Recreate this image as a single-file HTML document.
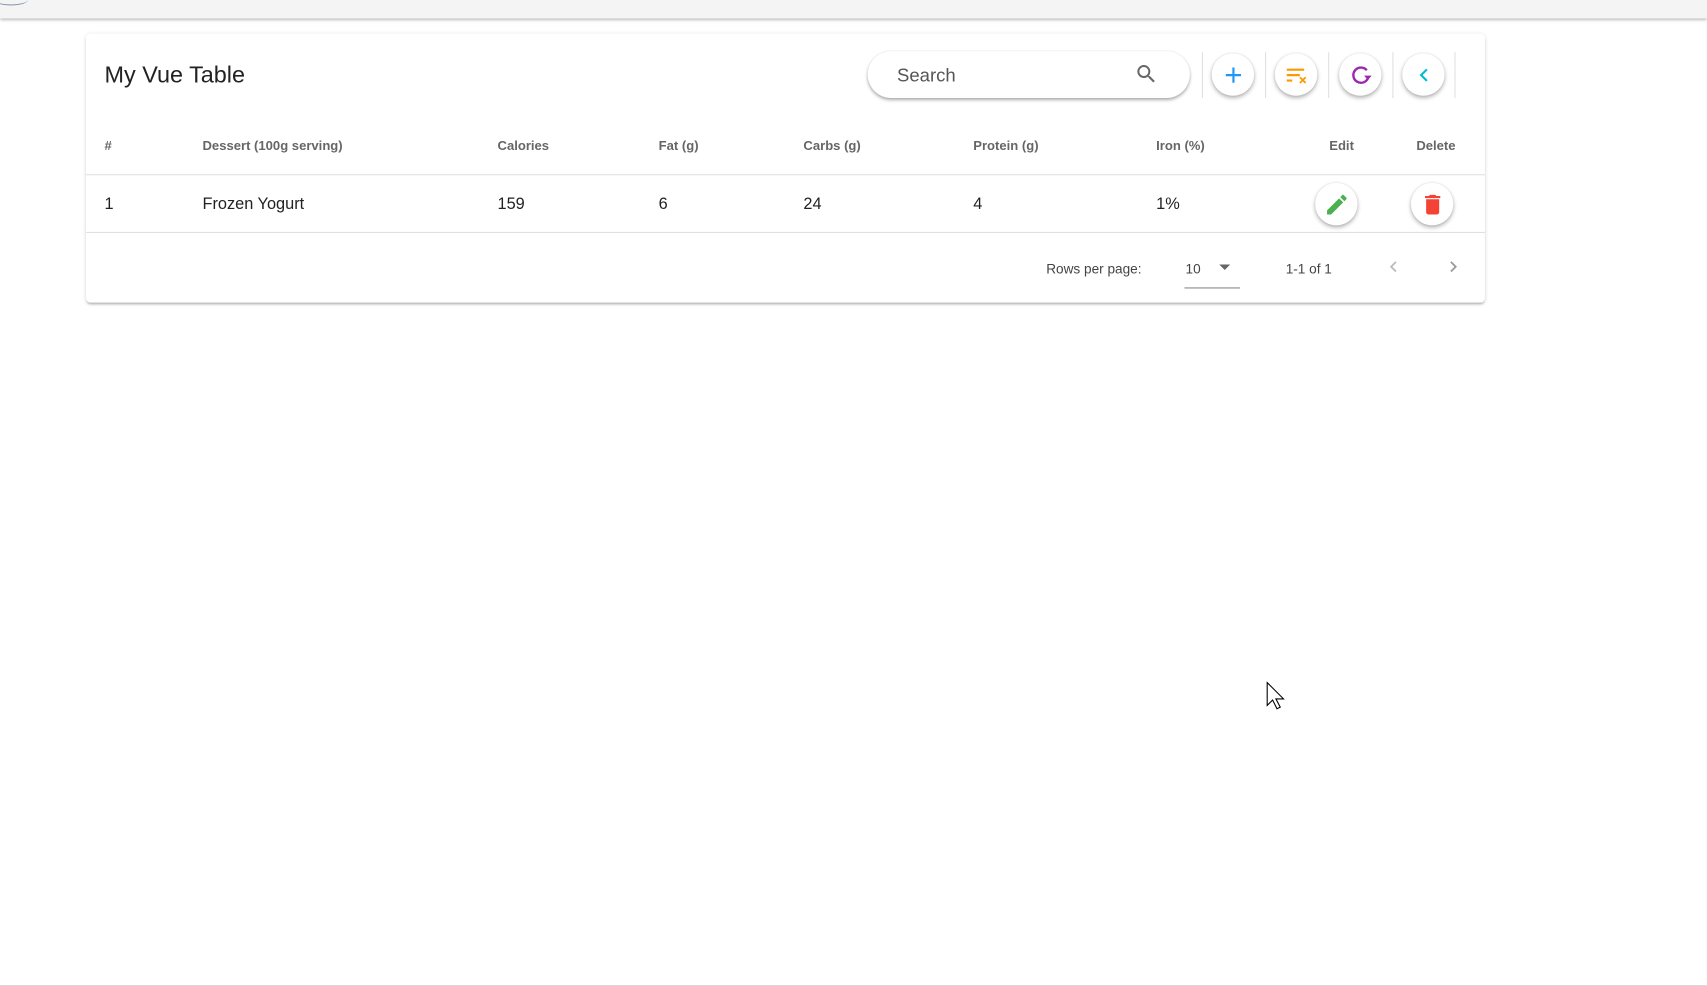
<!DOCTYPE html>
<html><head><meta charset="utf-8"><style>
html,body{margin:0;padding:0;width:1707px;height:986px;overflow:hidden;background:#fff;font-family:"Liberation Sans",sans-serif}
#w{position:absolute;left:0;top:0;width:1568px;height:906px;transform:scale(1.08865);transform-origin:0 0}
.a{position:absolute}
.top{left:0;top:0;width:1568px;height:17px;background:#f4f4f4;box-shadow:0 1px 3px rgba(0,0,0,.35)}
.card{left:79px;top:31px;width:1285px;height:247px;background:#fff;border-radius:4px;box-shadow:0 2px 2px -1px rgba(0,0,0,.25),0 1px 4px rgba(0,0,0,.14)}
.title{left:96px;top:57px;font-size:21.5px;color:#222}
.search{left:797px;top:47px;width:296px;height:43px;border-radius:22px;background:#fff;box-shadow:0 2px 3px rgba(0,0,0,.3),0 0 2px rgba(0,0,0,.1)}
.search span{position:absolute;left:27px;top:13px;font-size:17px;color:#555}
.div{top:48px;width:1px;height:42px;background:#e0e0e0}
.btn{width:39px;height:39px;border-radius:50%;background:#fff;box-shadow:0 2px 4px rgba(0,0,0,.3),0 0 2px rgba(0,0,0,.1)}
.btn svg{position:absolute;left:7.5px;top:7.5px}
.th{top:127px;font-size:12px;font-weight:bold;color:#666}
.td{top:179px;font-size:15px;color:#222}
.line{left:79px;width:1285px;height:1px;background:#e0e0e0}
.ft{font-size:12.5px;color:#444;top:240px}
</style></head><body><div id="w">
<div class="a top"></div>
<div class="a" style="left:-6px;top:-6px;width:32px;height:10px;border-radius:50%;border-bottom:1px solid #89a"></div>
<div class="a card"></div>
<div class="a title">My Vue Table</div>
<div class="a search"><span>Search</span>
<svg class="a" style="left:245px;top:10px" width="22" height="22" viewBox="0 0 24 24"><path fill="#666" d="M15.5 14h-.79l-.28-.27A6.47 6.47 0 0 0 16 9.5 6.5 6.5 0 1 0 9.5 16c1.610 0 3.09-.59 4.23-1.57l.27.28v.79l5 4.99L20.49 19l-4.99-5zm-6 0C7.01 14 5 11.99 5 9.5S7.01 5 9.5 5 14 7.01 14 9.5 11.99 14 9.5 14z"/></svg></div>
<div class="a div" style="left:1104px"></div><div class="a div" style="left:1162px"></div><div class="a div" style="left:1220px"></div><div class="a div" style="left:1279px"></div><div class="a div" style="left:1336px"></div>
<div class="a btn" style="left:1113px;top:49px"><svg width="24" height="24" viewBox="0 0 24 24"><path fill="#2196f3" d="M19 13h-6v6h-2v-6H5v-2h6V5h2v6h6v2z"/></svg></div>
<div class="a btn" style="left:1171px;top:49px"><svg width="24" height="24" viewBox="0 0 24 24"><path fill="#ff9800" d="M3 6h16v2H3zm0 5h12v2H3zm0 5h5v2H3zm11.5-1.5l1.1-1.1 2.1 2.1 2.1-2.1 1.1 1.1-2.1 2.1 2.1 2.1-1.1 1.1-2.1-2.1-2.1 2.1-1.1-1.1 2.1-2.1z"/></svg></div>
<div class="a btn" style="left:1230px;top:49px"><svg width="24" height="24" viewBox="0 0 24 24"><path fill="none" stroke="#9c27b0" stroke-width="2.2" d="M17.5 7.5A7 7 0 1 0 18.5 15"/><path fill="#9c27b0" d="M15 12.5h7l-3.5 4z"/></svg></div>
<div class="a btn" style="left:1288px;top:49px"><svg width="24" height="24" viewBox="0 0 24 24"><path fill="#00bcd4" d="M15.4 7.4L14 6l-6 6 6 6 1.4-1.4-4.6-4.6z"/></svg></div>
<div class="a th" style="left:96px">#</div>
<div class="a th" style="left:186px">Dessert (100g serving)</div>
<div class="a th" style="left:457px">Calories</div>
<div class="a th" style="left:605px">Fat (g)</div>
<div class="a th" style="left:738px">Carbs (g)</div>
<div class="a th" style="left:894px">Protein (g)</div>
<div class="a th" style="left:1062px">Iron (%)</div>
<div class="a th" style="left:1221px">Edit</div>
<div class="a th" style="left:1301px">Delete</div>
<div class="a line" style="top:160px"></div>
<div class="a td" style="left:96px">1</div>
<div class="a td" style="left:186px">Frozen Yogurt</div>
<div class="a td" style="left:457px">159</div>
<div class="a td" style="left:605px">6</div>
<div class="a td" style="left:738px">24</div>
<div class="a td" style="left:894px">4</div>
<div class="a td" style="left:1062px">1%</div>
<div class="a btn" style="left:1208px;top:168px"><svg width="24" height="24" viewBox="0 0 24 24"><path fill="#4caf50" d="M3 17.25V21h3.75L17.81 9.94l-3.75-3.75L3 17.25zM20.71 7.04a1 1 0 0 0 0-1.41l-2.34-2.34a1 1 0 0 0-1.41 0l-1.83 1.83 3.75 3.75 1.83-1.83z"/></svg></div>
<div class="a btn" style="left:1296px;top:168px"><svg width="24" height="24" viewBox="0 0 24 24"><path fill="#f44336" d="M6 19c0 1.1.9 2 2 2h8c1.1 0 2-.9 2-2V7H6v12zM19 4h-3.5l-1-1h-5l-1 1H5v2h14V4z"/></svg></div>
<div class="a line" style="top:213px"></div>
<div class="a ft" style="left:961px">Rows per page:</div>
<div class="a ft" style="left:1089px">10</div>
<div class="a" style="left:1120px;top:243px;width:0;height:0;border-left:5px solid transparent;border-right:5px solid transparent;border-top:5px solid #666"></div>
<div class="a" style="left:1088px;top:264px;width:51px;height:1px;background:#888"></div>
<div class="a ft" style="left:1181px">1-1 of 1</div>
<svg class="a" style="left:1270px;top:235px" width="20" height="20" viewBox="0 0 24 24"><path fill="#bbb" d="M15.4 7.4L14 6l-6 6 6 6 1.4-1.4-4.6-4.6z"/></svg>
<svg class="a" style="left:1325px;top:235px" width="20" height="20" viewBox="0 0 24 24"><path fill="#999" d="M10 6L8.6 7.4 13.2 12l-4.6 4.6L10 18l6-6z"/></svg>
<svg class="a" style="left:1163px;top:626px" width="18" height="27" viewBox="0 0 18 27"><path d="M1 1v21l5-5 4 8 3-1.5-4-7.5h7z" fill="#fff" stroke="#000" stroke-width="1"/></svg>
<div class="a" style="left:0;top:905px;width:1568px;height:1px;background:#ccc"></div>
</div></body></html>
